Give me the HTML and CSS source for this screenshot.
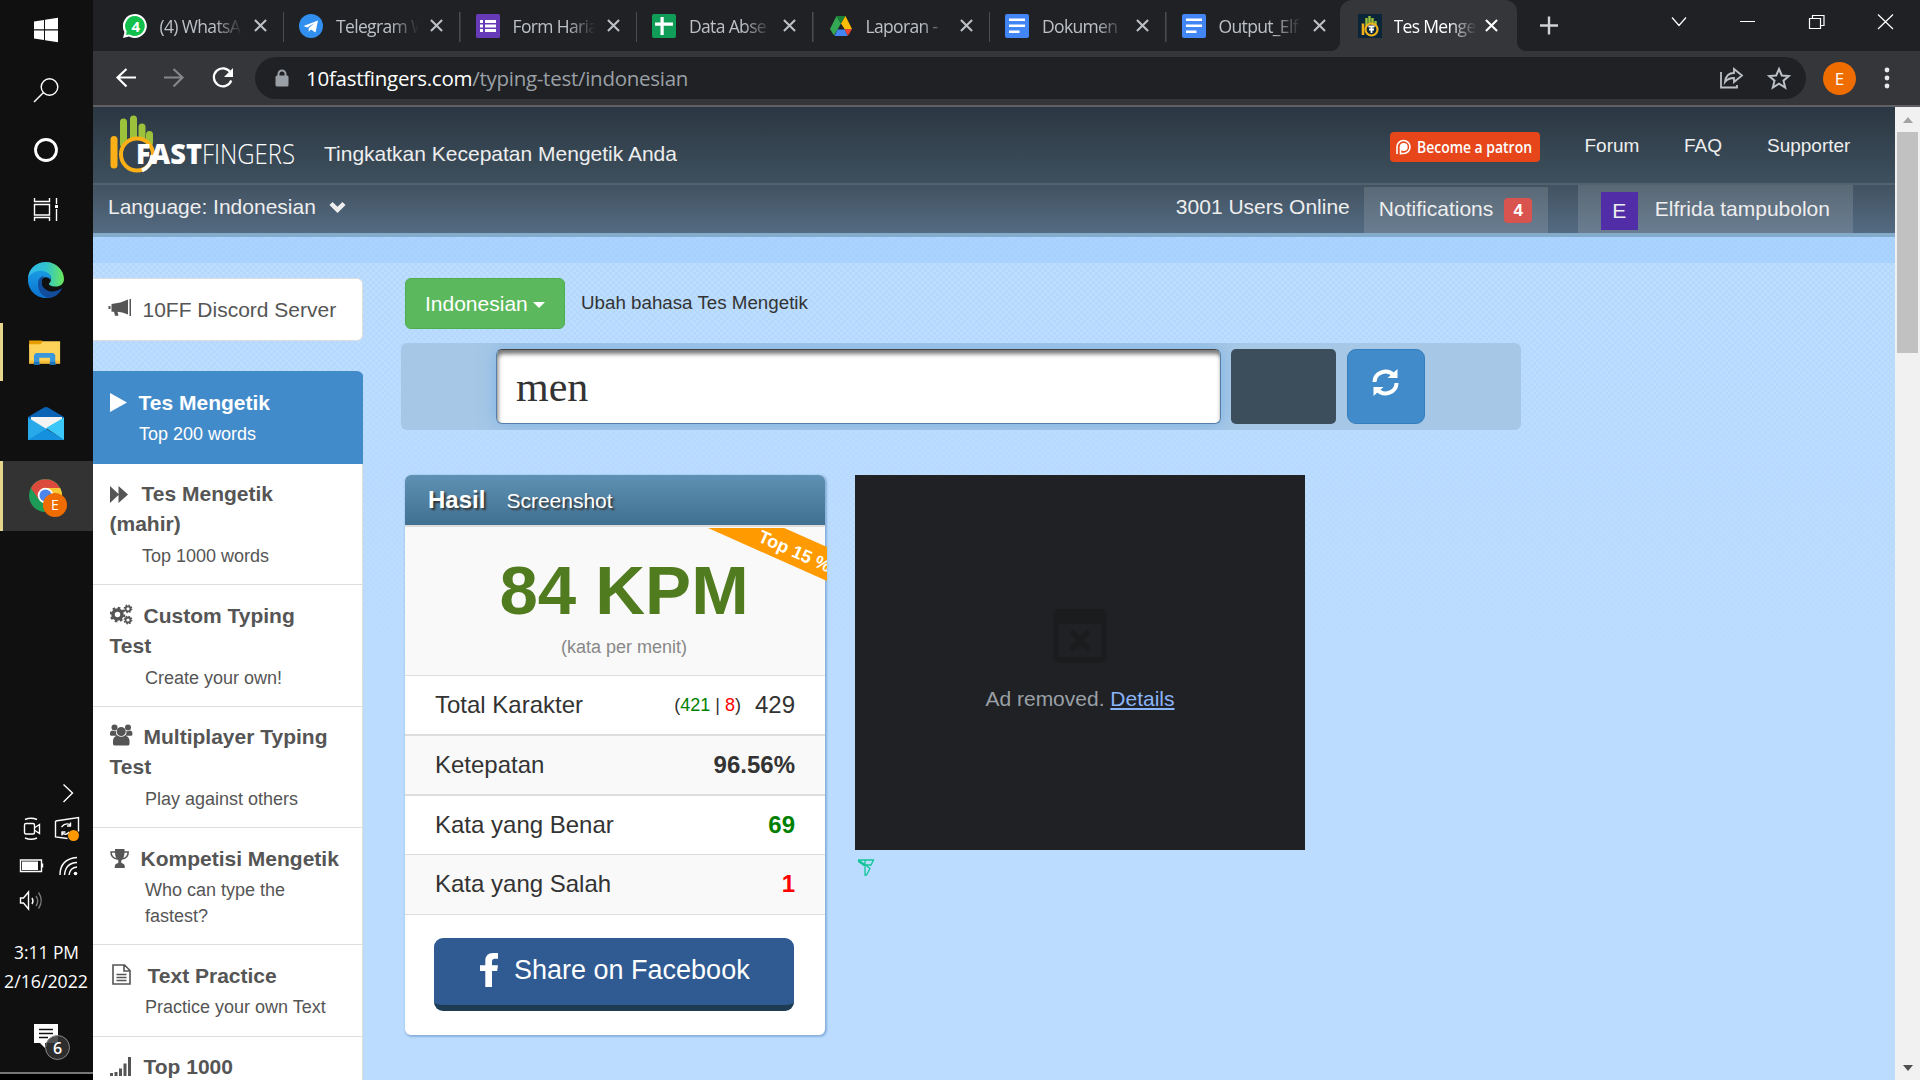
FILE: index.html
```html
<!DOCTYPE html>
<html lang="id">
<head>
<meta charset="utf-8">
<title>Tes Mengetik - 10FastFingers</title>
<link rel="stylesheet" href="styles.css">
</head>
<body>
<nav class="taskbar">
  <svg class="launch" width="93" height="252" viewBox="0 0 93 252">
    <path fill="#fff" d="M34 21.5l10-1.5v9.300h-10zM45 19.800l13-2v11.500h-13zM34 30.400h10v9.500l-10-1.500zM45 30.400h13v11.800l-13-2z"/>
    <g fill="none" stroke="#fff" stroke-width="1.400"><circle cx="49.500" cy="87" r="8.300"/><path d="M43.500 92.500L34 102"/></g>
    <circle cx="46" cy="150" r="10.500" fill="none" stroke="#fff" stroke-width="2.800"/>
    <g fill="none" stroke="#fff" stroke-width="1.400"><path d="M34.500 198v3.500h15V198M34.500 221v-3.500h15v3.500M34.500 204.500h15v10.500h-15zM56.500 198v6M56.500 209v12"/></g><path fill="#fff" d="M55 205h3v3h-3z"/>
  </svg>
  <svg width="93" height="71" viewBox="0 252 93 71">
    <defs>
      <linearGradient id="e1" x1="0" x2="1"><stop offset="0" stop-color="#35b8f0"/><stop offset=".5" stop-color="#2fc4cf"/><stop offset="1" stop-color="#6be85a"/></linearGradient>
      <linearGradient id="e2" x1="0" x2="0" y1="0" y2="1"><stop offset="0" stop-color="#1a9be3"/><stop offset="1" stop-color="#0a72d0"/></linearGradient>
    </defs>
    <path fill="url(#e1)" d="M28 279c0-10 8-17 18-17s18 8 18 17c0 5-4 7.500-8 7.500-5 0-7.500-1.500-7-3 2-2 2.500-4 1.500-7-2-6-14-7-22.500 2.500z"/>
    <path fill="url(#e2)" d="M28 279c2-8 15-11 21-5 2 2 2.200 4 1.500 6-1-3-9-5-9 2 0 9 7 15 14 12-3 3-6 4-10 4-10 0-18-9-17.500-19z"/>
    <path fill="#124c9c" d="M38 284c0-5 3-8 6-8-4 4-3 10 1 13 5 4 12 3 17-1-2 6-8 10-14 10-7-2-10-8-10-14z"/>
  </svg>
  <svg class="running" width="93" height="58" viewBox="3 323 93 58">
    <path fill="#e59d00" d="M30 340h13l2 2v6H30z"/><path fill="#ffd25a" d="M30 344h12l2-3h18v23H30z"/>
    <path fill="#f5bd35" d="M30 361h32v3H30z"/><path fill="#3b97dc" d="M35 355l2-2h18l2 2v10.500h-5.500V358h-11v7.500H35z"/><path fill="#1c74b8" d="M35 362h5.500v3.500H35zM51.500 362H57v3.500h-5.500z"/>
  </svg>
  <svg width="93" height="80" viewBox="0 381 93 80">
    <path fill="#0a63b5" d="M28 417l16-9.500q2-1 4 0L64 417v4H28z"/><path fill="#f4f4f4" d="M31 417h31v4L46 429l-15-8z"/>
    <path fill="#27a9ea" d="M28 417.500L64 440H28z"/><path fill="#1490df" d="M28 440l18-11 18 11z"/><path fill="#3bc8f8" d="M64 417.500V440L46 428z"/>
  </svg>
  <svg class="running current" width="93" height="70" viewBox="3 461 90 70">
    <circle cx="45.500" cy="495.500" r="16.500" fill="#1e9c57"/>
    <path fill="#dc4a3d" d="M31 488a16.500 16.500 0 0 1 29 0H45.500l-7 11z"/><path fill="#fdc835" d="M45.500 488h14.700a16.500 16.500 0 0 1-12 24l4.500-12z"/>
    <circle cx="45.500" cy="495.500" r="7.800" fill="#fff"/><circle cx="45.500" cy="495.500" r="6" fill="#4a86ee"/>
    <circle cx="55" cy="505" r="12" fill="#ee6c00"/><text class="shell" x="55" y="510" text-anchor="middle" font-size="14" fill="#fff">E</text>
  </svg>
  <div class="tray-space"></div>
  <svg class="tray" width="93" height="149" viewBox="0 775 93 149" fill="none" stroke="#fff" stroke-width="1.400">
    <path d="M63.500 784.500l9 8.500-9 9"/>
    <rect x="24.500" y="823.500" width="10" height="10.500" rx="1.500"/><path d="M35 827.500l4.500-3v9l-4.500-3M25 819.500q6-2.500 12 0M25 838q6 2.500 12 0"/>
    <path d="M55.500 821l23-3.500v14M55.500 821v16l12 1.500M61.500 827q4-5 9-2V822.500M71 826h-4M69 832q-3 4-7 1v2.500M61.500 832h4"/><circle cx="73.500" cy="835.500" r="5.500" fill="#ff9800" stroke="none"/>
    <path d="M20.500 860h21v11.500h-21z"/><path fill="#fff" stroke="none" d="M22 861.500h16v8.500H22zM42 863.500h1.200v4H42z"/>
    <path d="M60 875q0-16 17-17.500M64.500 875q1-12 12.500-12.500M69 875q1-7.500 8-8"/><circle cx="75.500" cy="873.500" r="1.800" fill="#fff" stroke="none"/>
    <path d="M20.500 898h3l5-6v17l-5-6h-3z"/><path d="M32 898q2 3 0 6"/><path stroke="#777" d="M36 896q3.500 5 0 10M38.500 892.500q5.500 8 0 16"/>
  </svg>
  <svg width="93" height="156" viewBox="0 924 93 156">
    <text class="shell" x="14" y="958.500" font-size="18" textLength="65" lengthAdjust="spacingAndGlyphs" fill="#fff">3:11 PM</text>
    <text class="shell" x="4" y="988" font-size="18" textLength="84" lengthAdjust="spacingAndGlyphs" fill="#fff">2/16/2022</text>
    <path fill="#fff" d="M34 1024h24v19H45v5l-5-5h-6z"/><path stroke="#101010" stroke-width="1.300" d="M39 1029.500h14M39 1033.500h14M39 1037.500h9"/>
    <circle cx="57.500" cy="1047.500" r="12" fill="#333" fill-opacity=".85" stroke="#888"/><text class="shell" x="57.500" y="1053.500" text-anchor="middle" font-size="16" font-weight="600" fill="#fff">6</text>
    <path fill="#767676" d="M0 1072h93v2H0z"/><path fill="#000" d="M0 1074h93v6H0z"/>
  </svg>
</nav>

<div class="browser">
  <div class="tabs">
    <div class="tab"><svg class="fav" viewBox="0 0 24 24"><path fill="#fff" d="M12 0a12 12 0 1 1-6 22.500L0 24l1.500-6A12 12 0 0 1 12 0z"/><path fill="#12c04b" d="M12 2a10 10 0 1 1-5.500 18.500L3 21l.8-3.500A10 10 0 0 1 12 2z"/><text class="shell" x="12.500" y="17.500" text-anchor="middle" font-size="15" font-weight="700" fill="#fff">4</text></svg><span class="name">(4) WhatsA</span><svg class="x" viewBox="0 0 14 14"><path d="M1 1l12 12M13 1L1 13"/></svg></div>
    <div class="tab"><svg class="fav" viewBox="0 0 24 24"><circle cx="12" cy="12" r="12" fill="#318ff0"/><path fill="#fff" d="M4.500 12L19 6.500 16.500 18.500l-4.500-3-2.300 2.200V14l6-5-7.500 4.500z"/></svg><span class="name">Telegram W</span><svg class="x" viewBox="0 0 14 14"><path d="M1 1l12 12M13 1L1 13"/></svg></div>
    <div class="tab"><svg class="fav" viewBox="0 0 24 24"><rect width="24" height="24" rx="1.500" fill="#673ab7"/><path fill="#fff" d="M4 6h3v3H4zM4 10.500h3v3H4zM4 15h3v3H4zM9 6h11v3H9zM9 10.500h11v3H9zM9 15h11v3H9z"/></svg><span class="name">Form Haria</span><svg class="x" viewBox="0 0 14 14"><path d="M1 1l12 12M13 1L1 13"/></svg></div>
    <div class="tab"><svg class="fav" viewBox="0 0 24 24"><rect width="24" height="24" rx="2" fill="#109d58"/><path fill="#fff" d="M8.500 3h3.200v5.500H21v3.200h-9.300V21H8.500v-9.300H3V8.500h5.500z"/></svg><span class="name">Data Abse</span><svg class="x" viewBox="0 0 14 14"><path d="M1 1l12 12M13 1L1 13"/></svg></div>
    <div class="tab"><svg class="fav" viewBox="0 0 24 24"><path fill="#34a853" d="M7.500 2L12 9.500 5 21.500 1 15z"/><path fill="#188038" d="M7.500 2h9L12 9.500z"/><path fill="#fbbc04" d="M16.500 2L23 15h-7.500L12 9.500z"/><path fill="#4285f4" d="M8.500 15.500H16L18.500 22h-13z"/><path fill="#ea4335" d="M15.500 15H23l-4.200 7z"/></svg><span class="name">Laporan -</span><svg class="x" viewBox="0 0 14 14"><path d="M1 1l12 12M13 1L1 13"/></svg></div>
    <div class="tab"><svg class="fav" viewBox="0 0 24 24"><rect width="24" height="24" rx="2" fill="#4285f4"/><path fill="#fff" d="M4 4.500h16v2.600H4zM4 10.500h16v2.600H4zM4 16.500h10.500v2.600H4z"/></svg><span class="name">Dokumen</span><svg class="x" viewBox="0 0 14 14"><path d="M1 1l12 12M13 1L1 13"/></svg></div>
    <div class="tab last"><svg class="fav" viewBox="0 0 24 24"><rect width="24" height="24" rx="2" fill="#4285f4"/><path fill="#fff" d="M4 4.500h16v2.600H4zM4 10.500h16v2.600H4zM4 16.500h10.500v2.600H4z"/></svg><span class="name">Output_Elf</span><svg class="x" viewBox="0 0 14 14"><path d="M1 1l12 12M13 1L1 13"/></svg></div>
    <div class="tab active"><svg class="fav" viewBox="0 0 24 24"><path fill="#0b2538" d="M0 0h24v24H0z"/><path stroke="#9cc23b" stroke-width="2.400" d="M8.500 4v8M11.500 2v8M14.500 4v7M17.500 7v5"/><path stroke="#f0b01c" stroke-width="2.600" d="M5 9.500V21"/><circle cx="13.500" cy="15.500" r="6" fill="none" stroke="#f0b01c" stroke-width="2.200"/><path stroke="#fff" stroke-width="1.800" fill="none" d="M10.500 12.500h6M13.500 12.500v6.500M11 15.500h5"/></svg><span class="name">Tes Menge</span><svg class="x" viewBox="0 0 14 14"><path d="M1 1l12 12M13 1L1 13"/></svg></div>
    <svg class="win" width="397" height="51" viewBox="1517 0 397 51" fill="none" stroke="#fff" stroke-width="1.200"><path stroke="#d0d1d3" stroke-width="2.400" d="M1540 25.500h18M1549 16.500v18"/><path d="M1672 17.500l7 8 7-8M1740 21.500h15M1809.500 18.500h11v10h-11zM1812.500 18.500v-3h11.500v10h-3.500M1878 14.500l15 14.500M1893 14.500L1878 29"/></svg>
  </div>
  <div class="toolbar">
    <svg width="142" height="54" viewBox="113 51 142 54" fill="none" stroke="#fff" stroke-width="2.200"><path d="M136 77.500h-18M126.500 69l-9 8.500 9 9"/><path stroke="#85868a" d="M164 77.500h18M173.500 69l9 8.500-9 9"/><path d="M230.500 72.500a9 9 0 1 0 .8 8"/><path fill="#fff" stroke="none" d="M233 68v9h-9z"/></svg>
    <div class="omnibox">
      <svg width="14" height="18" viewBox="0 0 14 18"><path fill="none" stroke="#9aa0a6" stroke-width="2" d="M3.500 8V5a3.500 3.500 0 0 1 7 0v3"/><rect y="6.500" x=".5" width="13" height="11" rx="1.500" fill="#9aa0a6"/></svg>
      <div class="url"><b>10fastfingers.com</b>/typing-test/indonesian</div>
      <svg class="actions" width="80" height="42" viewBox="1714 57 80 42" fill="none" stroke="#bdc1c6" stroke-width="1.800"><path d="M1721 72v15.500h16V85M1725 82q1-9 9-9v-4l8 6.500-8 6.500v-4q-6 0-9 4z"/><path stroke-width="2" d="M1779 69l2.800 6.500 7 .6-5.300 4.600 1.700 6.800-6.200-3.800-6.200 3.800 1.700-6.800-5.300-4.600 7-.6z"/></svg>
    </div>
    <div class="profile">E</div>
    <svg width="8" height="24" viewBox="0 0 8 24"><g fill="#e8eaed"><circle cx="4" cy="4" r="2.400"/><circle cx="4" cy="12" r="2.400"/><circle cx="4" cy="20" r="2.400"/></g></svg>
  </div>

  <div class="viewport">
    <div class="page">
      <header class="top">
        <svg class="logo" width="190" height="64" viewBox="108 113 190 64">
          <g stroke="#9cc23b" stroke-width="7" stroke-linecap="round"><path d="M123.500 122v22M133.500 119v20M142 127v12M149.500 134.500v8"/></g>
          <path stroke="#fcb017" stroke-width="7" stroke-linecap="round" d="M114 139.500v25.500"/>
          <circle cx="137" cy="154.500" r="16" fill="#34434f" stroke="#fcb017" stroke-width="4"/>
          <path d="M152.500 155q-2 12-10.500 15.500" fill="none" stroke="#fff" stroke-width="4"/>
          <text class="logotype" x="136" y="164" font-size="28" font-weight="800" textLength="66" lengthAdjust="spacingAndGlyphs">FAST</text>
          <text class="logotype" x="202" y="164" font-size="28" font-weight="300" textLength="93" lengthAdjust="spacingAndGlyphs">FINGERS</text>
        </svg>
        <p class="tagline">Tingkatkan Kecepatan Mengetik Anda</p>
        <div class="patron"><svg width="17" height="17" viewBox="0 0 17 17" fill="none" stroke="#fff" stroke-width="1.600"><path d="M2 15V8a6.500 6.500 0 1 1 6.500 6.500H6"/><circle cx="8.700" cy="8" r="3.200" fill="#fff"/><path d="M5.500 15.500V8"/></svg><svg width="117" height="24" viewBox="0 0 117 24"><text class="patron-text" x="0" y="18" textLength="115" lengthAdjust="spacingAndGlyphs">Become a patron</text></svg></div>
        <a class="forum">Forum</a><a class="faq">FAQ</a><a>Supporter</a>
      </header>
      <div class="sub">
        <span class="lang">Language: Indonesian</span>
        <svg width="17" height="12" viewBox="0 0 17 12"><path fill="none" stroke="#eee" stroke-width="4.500" d="M2 2.500l6.500 6.300L15 2.500"/></svg>
        <span class="online">3001 Users Online</span>
        <div class="notif">Notifications<b>4</b></div>
        <div class="user"><i>E</i>Elfrida tampubolon</div>
      </div>
      <div class="strip"></div>
      <div class="content">
        <aside>
          <div class="discord"><svg width="26" height="20" viewBox="0 0 26 20"><path fill="#555" d="M.5 8h2v3h-2zM3.500 6Q13 5 20 1.500v15Q14 14 9.500 13.800l1 4H7l-1-4H3.500zM21.500 1H23v17h-1.500z"/></svg>10FF Discord Server</div>
          <div class="menu">
            <div class="item on i1"><h4><svg width="29" height="20" viewBox="0 0 29 20"><path fill="#fff" d="M0 1l17 9.500L0 20z"/></svg>Tes Mengetik</h4><p>Top 200 words</p></div>
            <div class="item i2"><h4><svg width="32" height="18" viewBox="0 0 32 18"><path fill="#555" d="M0 1l8.500 8V1L18 9.500 8.500 18v-8L0 18z"/></svg>Tes Mengetik (mahir)</h4><p>Top 1000 words</p></div>
            <div class="item i3"><h4><svg width="34" height="21" viewBox="0 0 34 21" fill="none" stroke="#555"><circle cx="7.500" cy="10.500" r="4.500" stroke-width="3.500"/><circle cx="7.500" cy="10.500" r="6.800" stroke-width="2" stroke-dasharray="2.700 2.640"/><circle cx="18" cy="4.800" r="2.500" stroke-width="1.800"/><circle cx="18" cy="4.800" r="3.800" stroke-width="1.200" stroke-dasharray="1.600 1.380"/><circle cx="18" cy="16" r="2.500" stroke-width="1.800"/><circle cx="18" cy="16" r="3.800" stroke-width="1.200" stroke-dasharray="1.600 1.380"/></svg>Custom Typing Test</h4><p>Create your own!</p></div>
            <div class="item i4"><h4><svg width="34" height="22" viewBox="0 0 34 22" fill="#555"><circle cx="11.200" cy="7.500" r="4.500"/><circle cx="4.500" cy="3.500" r="3"/><circle cx="18" cy="3.500" r="3"/><path d="M3 20v-3q0-4.500 4.500-5.500 3.700 2.500 7.500 0 4.500 1 4.500 5.500v3q0 1.500-2 1.500H5q-2 0-2-1.500zM0 11V9q0-2 2-2.500 2 1 4 .6-.5 3 1.500 4.700H1zM22.400 11V9q0-2-2-2.500-2 1-4 .6.500 3-1.500 4.700h6.500z"/></svg>Multiplayer Typing Test</h4><p>Play against others</p></div>
            <div class="item i5"><h4><svg width="31" height="19" viewBox="0 0 31 19"><path fill="none" stroke="#555" stroke-width="1.500" d="M5 3H1q0 6 6 7M14 3h4.200q0 6-6 7"/><path fill="#555" d="M5 0h9.500v3q0 6-3.200 8.500V14q3.500.500 3.500 3.500V19h-10v-1.500q0-3 3.500-3.500v-2.500Q5 9 5 3z"/></svg>Kompetisi Mengetik</h4><p>Who can type the fastest?</p></div>
            <div class="item i6"><h4><svg width="38" height="21" viewBox="0 0 38 21" fill="none" stroke="#555" stroke-width="1.600"><path d="M3 1h11.500l5.500 5.500V20H3zM14 1v6h6M6.500 10.500h10M6.500 13.500h10M6.500 16.500h10"/></svg>Text Practice</h4><p>Practice your own Text</p></div>
            <div class="item i7"><h4><svg width="34" height="19" viewBox="0 0 34 19"><path fill="#555" d="M0 16h3v3H0zM4.500 15h3v4h-3zM9 11.500h3V19H9zM13.500 6.500h3V19h-3zM18 0h3v19h-3z"/></svg>Top 1000</h4></div>
          </div>
        </aside>
        <main>
          <div class="choose"><button class="green">Indonesian<i></i></button><span>Ubah bahasa Tes Mengetik</span></div>
          <div class="typing"><div class="field">men</div><div class="timer"></div><div class="reload"><svg width="27" height="27" viewBox="0 0 27 27"><path fill="none" stroke="#fff" stroke-width="4" d="M2.500 13A11 10.500 0 0 1 21.500 6M24.500 14A11 10.500 0 0 1 5.500 21"/><path fill="#fff" d="M25.500 0v9h-10zM1.500 27v-9h10z"/></svg></div></div>
          <div class="columns">
            <section class="card">
              <div class="card-head"><b>Hasil</b><span>Screenshot</span></div>
              <div class="score"><div class="corner"><span>Top 15 %</span></div><strong>84 KPM</strong><small>(kata per menit)</small></div>
              <div class="row r1"><span>Total Karakter</span><div><small>(<em class="ok">421</em> | <em class="bad">8</em>)</small>429</div></div>
              <div class="row r2 alt"><span>Ketepatan</span><b>96.56%</b></div>
              <div class="row r3"><span>Kata yang Benar</span><b class="ok">69</b></div>
              <div class="row r4 alt"><span>Kata yang Salah</span><b class="bad">1</b></div>
              <div class="share"><svg width="18" height="34" viewBox="0 0 18 34"><path fill="#fff" d="M18 0v5.800h-3.300q-2.700 0-2.700 3V12.300h6l-.8 5.800H12V34H5.300V18.100H0v-5.800h5.300V8Q5.300 0 13 0z"/></svg><span>Share on Facebook</span></div>
            </section>
            <section class="ads">
              <div class="ad"><svg width="54" height="54" viewBox="0 0 54 54"><path fill="#1b1c1d" fill-rule="evenodd" d="M6 0h42q6 0 6 6v42q0 6-6 6H6q-6 0-6-6V6q0-6 6-6zm0 15v33h42V15z"/><path stroke="#1b1c1d" stroke-width="5" d="M18 22l18 19M36 22L18 41"/></svg><p>Ad removed. <u>Details</u></p></div>
              <svg class="mark" width="17" height="17" viewBox="0 0 17 17" fill="none" stroke="#12c598" stroke-width="1.300"><path d="M.5 1h15l-2.500 5H7.500zM.5 1v1.500l7 5M7 1v5M7 8v8h1.500l3.500-6.500L7.500 6"/></svg>
            </section>
          </div>
        </main>
      </div>
    </div>
    <div class="scrollbar"><i class="up"></i><div class="thumb"></div><i class="down"></i></div>
  </div>
</div>
</body>
</html>
```
FILE: styles.css
```css
* { box-sizing: border-box; }
body { margin: 0; width: 1920px; height: 1080px; overflow: hidden; display: flex; font-family: "Liberation Sans", Arial, sans-serif; font-size: 21px; line-height: 30px; color: #333; }
h4, p { margin: 0; }
svg { display: block; flex: none; }
i, em { font-style: normal; }
.shell { font-family: "Open Sans", sans-serif; }

.taskbar { width: 93px; height: 1080px; flex: none; background: #101010; display: flex; flex-direction: column; }
.tray-space { flex: 1; }
.running { box-shadow: inset 3px 0 #e5d68b; padding-left: 3px; }
.running.current { background: #333; }

.browser { flex: 1; min-width: 0; display: flex; flex-direction: column; }
.tabs { height: 51px; background: #202124; display: flex; padding-left: 14.500px; font-family: "Open Sans", sans-serif; font-size: 17.500px; letter-spacing: -.65px; color: #bdc1c6; }
.tab { width: 176.500px; flex: none; display: flex; align-items: center; padding-left: 15px; background: linear-gradient(#4a4c50, #4a4c50) right 12px / 1.500px 30px no-repeat; }
.tab.last { background: none; width: 173.500px; }
.tab .fav { width: 24px; height: 24px; }
.name { width: 88px; margin: 0 6px 0 13px; white-space: nowrap; mask-image: linear-gradient(90deg, #000 62%, transparent 94%); }
.x { width: 13px; height: 13px; fill: none; stroke: #bdc1c6; stroke-width: 2.200; }
.tab.active { background: #35363a; border-radius: 12px 12px 0 0; color: #fff; position: relative; padding-left: 17.500px; }
.tab.active .name { margin: 0 3px 0 12px; }
.tab.active .x { stroke: #fff; }
.tab.active::before, .tab.active::after { content: ""; position: absolute; bottom: 0; width: 10px; height: 10px; }
.tab.active::before { left: -10px; background: radial-gradient(circle at 0 0, transparent 10px, #35363a 10.500px); }
.tab.active::after { right: -10px; background: radial-gradient(circle at 100% 0, transparent 10px, #35363a 10.500px); }

.toolbar { height: 56px; background: #35363a; border-bottom: 2px solid #5f6063; display: flex; align-items: center; padding-left: 20px; }
.omnibox { width: 1551px; height: 42px; border-radius: 21px; background: #202124; display: flex; align-items: center; padding-left: 20px; color: #9aa0a6; font-family: "Open Sans", sans-serif; font-size: 20.500px; }
.url { margin-left: 17px; letter-spacing: -.27px; }
.url b { font-weight: 400; color: #fff; }
.actions { margin-left: auto; margin-right: 12px; }
.profile { width: 33px; height: 33px; margin: 0 27px 0 17px; border-radius: 50%; background: #ee6c00; color: #fff; font: 17px/33px "Open Sans", sans-serif; text-align: center; }

.viewport { height: 973px; display: flex; }
.page { width: 1802px; overflow: hidden; background: linear-gradient(rgba(187,220,255,.2) 150px, #bbdcff 640px), repeating-conic-gradient(#b3d6fa 0 25%, #bcdeff 0 50%) 0 0 / 6px 6px; }
.top { height: 78px; background: linear-gradient(#2b3742, #3e505e); border-bottom: 2px solid #52626f; display: flex; color: #eee; padding-left: 15px; }
.logo { margin-top: 6px; }
.tagline { margin: 32px 0 0 26px; width: 1066px; }
.patron { width: 150px; height: 30px; margin-top: 25px; background: #e6461a; border-radius: 4px; display: flex; align-items: center; padding-left: 5px; gap: 5px; }
.patron-text { font: 600 16px "Open Sans", sans-serif; fill: #fff; }
.logotype { font-family: "Open Sans", sans-serif; fill: #fff; }
.top a { font-size: 19px; margin-top: 24px; }
.forum { margin-left: 44.500px; width: 99.500px; }
.faq { width: 83px; }
.sub { height: 48px; background: linear-gradient(#425261, #546b82); display: flex; color: #eee; padding-left: 15px; }
.lang, .online { margin-top: 7px; }
.sub > svg { margin: 16px 0 0 13px; }
.online { margin-left: 830px; width: 188px; }
.notif { width: 184px; height: 46px; margin-top: 2px; padding: 7px 0 0 15px; background: rgba(255,255,255,.13); display: flex; }
.notif b { width: 28px; height: 25px; margin: 4px 0 0 11px; background: #d9534f; border-radius: 4px; font-size: 17px; line-height: 25px; text-align: center; color: #fff; }
.user { width: 275px; height: 48px; margin-left: 30px; padding: 9px 0 0 23px; background: rgba(255,255,255,.13); display: flex; }
.user i { width: 37px; height: 38px; margin: -2px 17px 0 0; background: #512da8; text-align: center; line-height: 38px; }
.strip { height: 30px; border-top: 4px solid #84abcb; background: rgba(150,202,252,.45); }

.content { display: flex; padding-top: 15px; }
aside { width: 312px; }
.discord { width: 270px; height: 63px; border: 1px solid #ddd; border-left: 0; border-radius: 0 6px 6px 0; background: #fff; color: #555; display: flex; align-items: center; padding-left: 15px; white-space: nowrap; }
.discord svg { margin-right: 8.500px; margin-top: -4px; }
.menu { margin-top: 30px; width: 270px; border-radius: 0 6px 0 0; overflow: hidden; }
.item { background: #fff; color: #555; padding: 16px 22px 0 16.500px; border-bottom: 1px solid #ddd; border-right: 1px solid #ddd; }
.item.on { background: #428bca; color: #fff; border-color: #428bca; }
.item h4 { font-size: 21px; line-height: 30px; }
.item h4 svg { display: inline-block; vertical-align: -2px; }
.item p { font-size: 18px; line-height: 26px; margin: 3px 24px 0 35.500px; }
.i1 { height: 93px; padding-top: 17px; } .i1 p { margin-left: 29.500px; }
.i2 { height: 121px; padding-top: 15px; } .i2 p { margin-left: 32.500px; margin-top: 4px; }
.i3 { height: 122px; } .i3 p { margin-top: 4px; }
.i4 { height: 121px; padding-top: 15px; } .i4 p { margin-top: 4px; }
.i5 { height: 117px; padding-right: 0; } .i5 h4 { white-space: nowrap; }
.i6 { height: 92px; }
.i6 p { margin-right: 0; white-space: nowrap; }
.i7 { height: 60px; padding-top: 15px; }

main { width: 1300px; }
.choose { display: flex; height: 51px; gap: 16px; font-size: 18.750px; }
.choose span { margin-top: 10px; }
.green { width: 160px; height: 51px; padding: 0 0 0 19px; border: 1px solid #4cae4c; border-radius: 6px; background: #5cb85c; color: #fff; font: 21px "Liberation Sans", Arial, sans-serif; display: flex; align-items: center; }
.green i { border: 6px solid transparent; border-top: 6px solid #fff; border-bottom: 0; margin: 2px 0 0 5px; }
.typing { width: 1120px; height: 87px; margin: 14px 0 0 -4px; padding: 6px 0 0 95px; border-radius: 6px; background: #a6c7e6; display: flex; overflow: hidden; }
.field { width: 725px; height: 75px; padding: 0 19px; border: 1px solid #557fa8; border-top-color: #444; border-radius: 6px; background: #fff; box-shadow: inset 1px 4px 4px #777, 0 0 18px #7eb3e3; font: 42px/74px "Liberation Serif", "Times New Roman", serif; }
.timer { width: 105px; height: 75px; margin-left: 10px; border-radius: 5px; background: #3c4d5c; }
.reload { width: 78px; height: 75px; margin-left: 11px; border: 1px solid #357ebd; border-radius: 9px; background: #428bca; padding: 19px 0 0 24px; }
.columns { display: flex; margin-top: 45px; gap: 30px; }
.card { width: 420px; height: 560px; border-radius: 6px; background: #fff; box-shadow: 1px 1px 2px 1px #8ab2dc; }
.card-head { height: 52px; border-radius: 6px 6px 0 0; border-bottom: 2px solid #ddd; background: linear-gradient(#5e91b3, #417091); color: #fff; text-shadow: 2px 2px 2px #333; padding: 10px 0 0 23px; display: flex; gap: 21px; }
.card-head b { font-size: 24px; }
.card-head span { margin-top: 1px; }
.score { height: 149px; background: #f9f9f9; border-bottom: 1px solid #ddd; display: flex; flex-direction: column; align-items: center; padding: 26px 0 0 18px; position: relative; }
.score strong { font-size: 69px; line-height: 76px; color: #507b1f; }
.score small { font-size: 18px; line-height: 26px; color: #888; margin-top: 5px; }
.corner { position: absolute; top: 1px; right: -2px; width: 125px; height: 60px; overflow: hidden; }
.corner span { position: absolute; left: -54px; top: -31px; width: 240px; height: 31px; background: #ff9b00; color: #fff; font-weight: 700; font-size: 18px; line-height: 34px; padding-left: 110px; white-space: nowrap; transform-origin: 60px 100%; transform: rotate(24deg); }
.row { height: 60px; border-bottom: 1px solid #ddd; padding: 14px 30px 0 30px; display: flex; justify-content: space-between; font-size: 24px; }
.row.alt { background: #f9f9f9; }
.row small { font-size: 18px; margin-right: 14px; position: relative; top: -2px; }
.r1, .r2 { border-bottom-width: 2px; }
.r3 { height: 59px; } .r4 { height: 60px; }
.ok { color: #008000; } .bad { color: #f00; }
.share { width: 360px; height: 73px; margin: 23px 0 0 29px; border-radius: 9px; border-bottom: 6px solid #1d3c54; background: #2f5a92; color: #fff; font-size: 27px; display: flex; align-items: center; padding: 0 0 3px 46px; gap: 16px; }
.ad { width: 450px; height: 375px; background: #202124; color: #9aa0a6; display: flex; flex-direction: column; align-items: center; padding-top: 134px; gap: 21px; }
.ad u { color: #8ab4f8; }
.mark { margin: 9px 0 0 3px; }

.scrollbar { width: 25px; background: #f1f1f1; display: flex; flex-direction: column; align-items: center; }
.thumb { width: 21px; height: 221px; background: #c1c1c1; margin-top: 9px; }
.up { border: 5.500px solid transparent; border-top: 0; border-bottom: 6px solid #a3a3a3; margin-top: 10px; }
.down { border: 5.500px solid transparent; border-bottom: 0; border-top: 6px solid #505050; margin: auto 0 9px; }
```
